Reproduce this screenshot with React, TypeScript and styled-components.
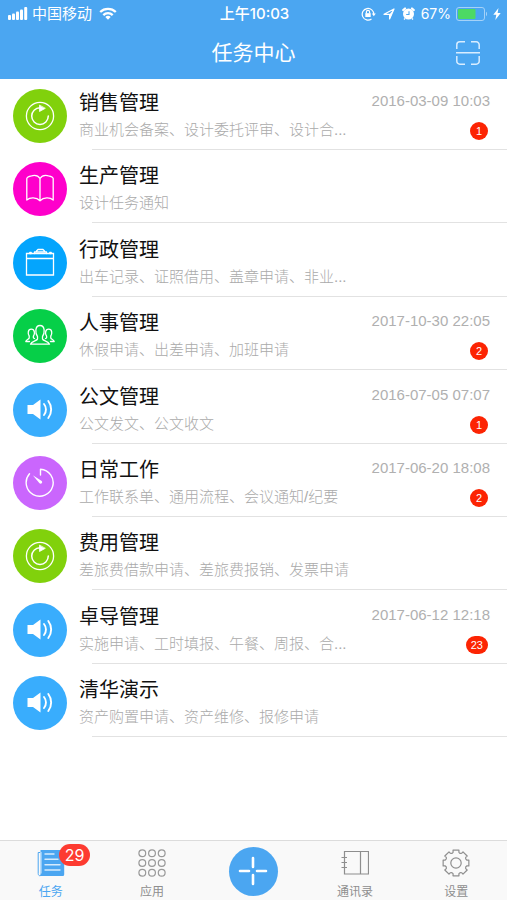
import React from "react";
import styled, { createGlobalStyle } from "styled-components";

const BLUE = "#4ba6f1";

const GlobalStyle = createGlobalStyle`
  * { box-sizing: border-box; }
  html, body { margin: 0; padding: 0; background: #fff; }
  body, button { font-family: "Liberation Sans", "Noto Sans CJK SC", sans-serif; }
  button { border: 0; padding: 0; background: none; color: inherit; cursor: pointer; }
`;

const Screen = styled.div`
  display: flex;
  flex-direction: column;
  min-height: 100vh;
`;

const Header = styled.header`
  background: ${BLUE};
  color: #fff;
`;

const StatusBar = styled.div`
  display: grid;
  grid-template-columns: 1fr auto 1fr;
  align-items: center;
  height: 27px;
  padding: 0 6px 0 8px;
  line-height: 20px;
`;

const StatusGroup = styled.div<{ $end?: boolean }>`
  display: flex;
  align-items: center;
  justify-content: ${(p) => (p.$end ? "flex-end" : "flex-start")};
  gap: ${(p) => (p.$end ? 5 : 4)}px;
`;

const Carrier = styled.span`
  font-size: 15px;
  padding-right: 3px;
`;

const Clock = styled.time`
  font-family: Inter, "Noto Sans CJK SC", sans-serif;
  font-size: 15px;
  font-weight: 500;
`;

const StatusIcons = styled.span`
  display: flex;
  align-items: center;
  gap: 7px;
  padding-right: 1px;
`;

const Percent = styled.span`
  font-family: Inter, sans-serif;
  font-size: 14px;
`;

const TitleBar = styled.div`
  display: grid;
  grid-template-columns: 1fr auto 1fr;
  align-items: center;
  height: 52px;
  padding: 0 26px;
`;

const PageTitle = styled.h1`
  grid-column: 2;
  margin: 0;
  font-size: 21px;
  font-weight: 400;
  line-height: 28px;
`;

const ScanButton = styled.button`
  justify-self: end;
  display: flex;
`;

const TaskList = styled.ul`
  display: flex;
  flex-direction: column;
  justify-content: space-between;
  min-height: 658px;
  margin: 0;
  padding: 0;
  list-style: none;
`;

const TaskRow = styled.li`
  display: flex;
  flex-direction: column;
`;

const TaskButton = styled.button`
  display: flex;
  align-items: flex-start;
  gap: 12px;
  width: 100%;
  height: 70px;
  padding: 10px 17px 0 13px;
  text-align: left;
`;

const Avatar = styled.span<{ $color: string }>`
  flex: none;
  display: grid;
  place-items: center;
  width: 54px;
  height: 54px;
  border-radius: 50%;
  background: ${(p) => p.$color};
`;

const TaskText = styled.span`
  flex: 1;
  min-width: 0;
  display: flex;
  flex-direction: column;
`;

const TaskName = styled.span`
  color: #111;
  font-size: 20px;
  line-height: 28px;
`;

const TaskSummary = styled.span`
  color: #aaa;
  font-size: 15px;
  font-weight: 300;
  line-height: 26px;
  white-space: nowrap;
  overflow: hidden;
`;

const TaskMeta = styled.span`
  flex: none;
  display: flex;
  flex-direction: column;
  align-items: flex-end;
  gap: 9px;
`;

const TaskDate = styled.time`
  color: #b0b0b0;
  font-size: 15px;
  line-height: 24px;
`;

const CountBadge = styled.span`
  min-width: 18px;
  height: 18px;
  margin-right: 2px;
  padding: 0 5px;
  border-radius: 9px;
  background: #fc2403;
  color: #fff;
  font-size: 11px;
  line-height: 18px;
  text-align: center;
`;

const Divider = styled.span`
  height: 1px;
  margin-left: 92px;
  background: #e2e2e2;
`;

const TabBar = styled.nav`
  display: grid;
  grid-template-columns: repeat(5, 1fr);
  height: 60px;
  margin-top: auto;
  border-top: 1px solid #dcdcdc;
  background: #f9f9f9;
`;

const Tab = styled.button<{ $active?: boolean }>`
  display: flex;
  flex-direction: column;
  align-items: center;
  gap: 6px;
  padding-top: 8px;
  color: ${(p) => (p.$active ? BLUE : "#8e8e8e")};
  font-size: 12px;
  line-height: 18px;
`;

const TabIcon = styled.span`
  position: relative;
  display: flex;
`;

const TabBadge = styled.span`
  position: absolute;
  left: 22px;
  top: -5px;
  padding: 0 6px;
  border-radius: 11px;
  background: #fd3b31;
  color: #fff;
  font-family: Inter, sans-serif;
  font-size: 16px;
  line-height: 22px;
`;

const AddButton = styled.button`
  place-self: center;
  display: grid;
  place-items: center;
  width: 49px;
  height: 49px;
  border-radius: 50%;
  background: ${BLUE};
`;

const line = {
  fill: "none",
  stroke: "#fff",
  strokeWidth: 1.3,
  strokeLinecap: "round" as const,
  strokeLinejoin: "round" as const,
};

function RefreshIcon() {
  return (
    <svg width="30" height="30" viewBox="0 0 30 30" {...line}>
      <circle cx="15" cy="15" r="13.6" />
      <path d="M16 6.800H15a8.300 8.300 0 1 0 8.300 8.300" strokeWidth="1.500" />
      <path d="M14.500 4.500v6l5.500-3z" fill="#fff" strokeWidth=".8" />
    </svg>
  );
}

function BookIcon() {
  return (
    <svg width="30" height="30" viewBox="0 0 30 30" {...line}>
      <path d="M15 4.500C13 1.300 9 1.200 6.500 1.800 4 2.300 2 3 1.800 4.500V26c3.200-2.800 9.500-3 13.200.8 3.700-3.800 10-3.600 13.200-.8V4.500C28 3 26 2.300 23.500 1.800 21 1.200 17 1.300 15 4.500zV26.500" />
    </svg>
  );
}

function CaseIcon() {
  return (
    <svg width="30" height="30" viewBox="0 0 30 30" {...line}>
      <path d="M1.500 5.500h27v21.500h-27zM1.500 10.500h27" strokeLinejoin="miter" />
      <path d="M9.500 5.500V4h2V3l1.500-1.500h5L19.500 3v1h2v1.500M11.500 4h8" />
      <path d="M4.800 5.500v-1h1.400v1zM24.800 5.500v-1h1.400v1z" fill="#fff" />
    </svg>
  );
}

function PeopleIcon() {
  return (
    <svg width="30" height="30" viewBox="0 0 30 30" {...line}>
      <path d="M12.500 15.500C10.300 13 9.500 4.500 15 4.500s4.700 8.500 2.500 11v2.500c.5 2 6 1.800 7 5.200h-19c1-3.400 6.500-3.200 7-5.200z" />
      <path d="M9.500 17.500c-1-.3-1.500-1-1-2.500 1.500-2 1.500-6.800-2.200-6.800S2.700 13 4.200 15v2C3.700 18.600 1 18.500.8 20.500H4.500M20.500 17.500c1-.3 1.500-1 1-2.500-1.500-2-1.500-6.800 2.200-6.800s3.600 4.800 2.100 6.800v2c.5 1.600 3.200 1.500 3.400 3.500H25.500" />
    </svg>
  );
}

function SpeakerIcon() {
  return (
    <svg width="30" height="30" viewBox="0 0 30 30" {...line}>
      <path d="M2.500 10H8L15.500 4.500v20L8 19H2.500z" fill="#fff" stroke="none" />
      <path d="M19 9c2.600 3.200 2.600 7.800 0 11M23.300 6c3.800 5 3.800 12 0 17" strokeWidth="1.900" />
    </svg>
  );
}

function TimerIcon() {
  return (
    <svg width="30" height="30" viewBox="0 0 30 30" {...line}>
      <path d="M15.500 7V1.200A13.500 13.500 0 1 1 4.500 5.800" strokeWidth="1.400" />
      <path d="M7.800 7.300L16.700 13c1.500 1.500-.8 3.600-2.200 2.200z" fill="#fff" stroke="none" />
    </svg>
  );
}

function SignalIcon() {
  return (
    <svg width="20" height="13" viewBox="0 0 20 13" fill="#fff">
      <rect x="0" y="8" width="3" height="5" rx="1" />
      <rect x="4" y="6.500" width="3" height="6.500" rx="1" />
      <rect x="8" y="4.500" width="3" height="8.500" rx="1" />
      <rect x="12" y="2.500" width="3" height="10.500" rx="1" />
      <rect x="16.200" y="0" width="3" height="13" rx="1" />
    </svg>
  );
}

function WifiIcon() {
  return (
    <svg width="18" height="13" viewBox="0 0 18 13" fill="none" stroke="#fff" strokeWidth="2.300">
      <path d="M1.200 5a11.200 11.200 0 0 1 15.600 0M4.300 8.100a6.800 6.800 0 0 1 9.400 0" />
      <path d="M9 12.800L6.300 10a4 4 0 0 1 5.400 0z" fill="#fff" stroke="none" />
    </svg>
  );
}

function LockIcon() {
  return (
    <svg width="15" height="14" viewBox="0 0 15 14" fill="none" stroke="#fff" strokeWidth="1.200">
      <path d="M10.500 11.900A5.800 5.800 0 1 1 12.800 7.500" />
      <path d="M10.800 6.500h4l-2 2.800z" fill="#fff" stroke="none" />
      <rect x="4.300" y="6.200" width="5.400" height="3.800" fill="#fff" stroke="none" />
      <path d="M5.400 6.500V5a1.600 1.600 0 0 1 3.200 0v1.500" />
    </svg>
  );
}

function LocationIcon() {
  return (
    <svg width="12" height="12" viewBox="0 0 12 12" fill="none" stroke="#fff" strokeWidth="1.200" strokeLinejoin="round">
      <path d="M1 6.300L11 1 6.600 11V6.300z" />
      <path d="M6.600 6.300L11 1 6.600 11z" fill="#fff" stroke="none" />
    </svg>
  );
}

function AlarmIcon() {
  return (
    <svg width="13" height="13" viewBox="0 0 13 13">
      <circle cx="6.500" cy="7" r="5.500" fill="#fff" />
      <path d="M1.200 3L3 1.500M11.800 3L10 1.500" stroke="#fff" strokeWidth="2.200" strokeLinecap="round" />
      <path d="M7 4.200v3.300H4.200" fill="none" stroke={BLUE} strokeWidth="1.100" />
      <path d="M3 11.500l-1 1M10 11.500l1 1" stroke="#fff" strokeWidth="1.300" />
    </svg>
  );
}

function BatteryIcon() {
  return (
    <svg width="32" height="14" viewBox="0 0 32 14">
      <rect x=".5" y=".5" width="28" height="13" rx="2.500" fill="none" stroke="#a5d2f8" />
      <rect x="2" y="2" width="17.500" height="10" rx="1" fill="#4cd964" />
      <path d="M30 4.800c1.400.5 1.400 3.900 0 4.400z" fill="#a5d2f8" />
    </svg>
  );
}

function BoltIcon() {
  return (
    <svg width="8" height="12" viewBox="0 0 8 12" fill="#fff">
      <path d="M5.500 0L.3 6.800h3L2.300 12l5.400-7H4.600z" />
    </svg>
  );
}

function ScanIcon() {
  return (
    <svg width="26" height="26" viewBox="0 0 26 26" fill="none" stroke="#d9edff" strokeWidth="1.500">
      <path d="M1.800 9V4.800a3 3 0 0 1 3-3H10M16 1.800h5.200a3 3 0 0 1 3 3V9M1.800 16v5.200a3 3 0 0 0 3 3H10M16 24.200h5.200a3 3 0 0 0 3-3V16M1 12.800h24" />
    </svg>
  );
}

function NewsIcon() {
  return (
    <svg width="28" height="28" viewBox="0 0 28 28">
      <path d="M3.500 1h23.700v24.500a1.500 1.500 0 0 1-1.500 1.500H3.500z" fill={BLUE} />
      <path d="M3.500 3.500H1.200v21c0 3 3.300 2.800 3.300.5" fill="none" stroke={BLUE} />
      <path d="M4 3v21.500" stroke="#d6ebfd" />
      <path d="M8 5h9M8 10.300h13M8 15.700h15M8 21h15" stroke="#d6ebfd" strokeWidth="1.400" strokeLinecap="round" />
    </svg>
  );
}

function GridIcon() {
  const centres = [4.3, 14, 23.7];
  return (
    <svg width="28" height="28" viewBox="0 0 28 28" fill="none" stroke="#999" strokeWidth="1.200">
      {centres.map((y) => centres.map((x) => <circle key={`${x}-${y}`} cx={x} cy={y} r="3.400" />))}
    </svg>
  );
}

function ContactsIcon() {
  return (
    <svg width="28" height="28" viewBox="0 0 28 28" fill="none" stroke="#8e8e8e" strokeWidth="1.200">
      <path d="M3.500 2.500h24v22.500h-24zM19.500 2.500V25M.5 8.500H6M.5 13.500H6M.5 18.500H6" />
    </svg>
  );
}

function GearIcon() {
  const teeth = Array.from({ length: 8 }, (_, i) => {
    const at = (deg: number, r: number) => {
      const a = ((i * 45 + deg) * Math.PI) / 180;
      return `${(14 + r * Math.sin(a)).toFixed(2)} ${(14 - r * Math.cos(a)).toFixed(2)}`;
    };
    return `${i ? "L" : "M"}${at(-13, 13.2)}L${at(13, 13.2)}L${at(15, 11.2)}Q${at(22.5, 9.8)} ${at(30, 11.2)}`;
  }).join("");
  return (
    <svg width="28" height="28" viewBox="0 0 28 28" fill="none" stroke="#8e8e8e" strokeWidth="1.200" strokeLinejoin="round">
      <path d={`${teeth}Z`} />
      <circle cx="14" cy="14" r="5.200" />
    </svg>
  );
}

function PlusIcon() {
  return (
    <svg width="30" height="30" viewBox="0 0 30 30" stroke="#fff" strokeWidth="2.600" strokeLinecap="round">
      <path d="M15 2v9M15 19v9M2 15h9M19 15h9" />
    </svg>
  );
}

interface Task {
  name: string;
  summary: string;
  color: string;
  icon: React.ReactNode;
  date?: string;
  count?: number;
}

const tasks: Task[] = [
  { name: "销售管理", summary: "商业机会备案、设计委托评审、设计合...", color: "#81d10c", icon: <RefreshIcon />, date: "2016-03-09 10:03", count: 1 },
  { name: "生产管理", summary: "设计任务通知", color: "#fe00cb", icon: <BookIcon /> },
  { name: "行政管理", summary: "出车记录、证照借用、盖章申请、非业...", color: "#04a5fd", icon: <CaseIcon /> },
  { name: "人事管理", summary: "休假申请、出差申请、加班申请", color: "#06cf48", icon: <PeopleIcon />, date: "2017-10-30 22:05", count: 2 },
  { name: "公文管理", summary: "公文发文、公文收文", color: "#39adfd", icon: <SpeakerIcon />, date: "2016-07-05 07:07", count: 1 },
  { name: "日常工作", summary: "工作联系单、通用流程、会议通知/纪要", color: "#ca66fd", icon: <TimerIcon />, date: "2017-06-20 18:08", count: 2 },
  { name: "费用管理", summary: "差旅费借款申请、差旅费报销、发票申请", color: "#81d10c", icon: <RefreshIcon /> },
  { name: "卓导管理", summary: "实施申请、工时填报、午餐、周报、合...", color: "#39adfd", icon: <SpeakerIcon />, date: "2017-06-12 12:18", count: 23 },
  { name: "清华演示", summary: "资产购置申请、资产维修、报修申请", color: "#39adfd", icon: <SpeakerIcon /> },
];

export default function App() {
  return (
    <Screen>
      <GlobalStyle />
      <Header>
        <StatusBar>
          <StatusGroup>
            <SignalIcon />
            <Carrier>中国移动</Carrier>
            <WifiIcon />
          </StatusGroup>
          <Clock>上午10:03</Clock>
          <StatusGroup $end>
            <StatusIcons>
              <LockIcon />
              <LocationIcon />
              <AlarmIcon />
            </StatusIcons>
            <Percent>67%</Percent>
            <BatteryIcon />
            <BoltIcon />
          </StatusGroup>
        </StatusBar>
        <TitleBar>
          <PageTitle>任务中心</PageTitle>
          <ScanButton aria-label="扫一扫">
            <ScanIcon />
          </ScanButton>
        </TitleBar>
      </Header>
      <main>
        <TaskList>
          {tasks.map((task) => (
            <TaskRow key={task.name}>
              <TaskButton>
                <Avatar $color={task.color}>{task.icon}</Avatar>
                <TaskText>
                  <TaskName>{task.name}</TaskName>
                  <TaskSummary>{task.summary}</TaskSummary>
                </TaskText>
                {task.date && (
                  <TaskMeta>
                    <TaskDate>{task.date}</TaskDate>
                    <CountBadge>{task.count}</CountBadge>
                  </TaskMeta>
                )}
              </TaskButton>
              <Divider />
            </TaskRow>
          ))}
        </TaskList>
      </main>
      <TabBar>
        <Tab $active aria-current="page">
          <TabIcon>
            <NewsIcon />
            <TabBadge>29</TabBadge>
          </TabIcon>
          任务
        </Tab>
        <Tab>
          <GridIcon />
          应用
        </Tab>
        <AddButton aria-label="新建">
          <PlusIcon />
        </AddButton>
        <Tab>
          <ContactsIcon />
          通讯录
        </Tab>
        <Tab>
          <GearIcon />
          设置
        </Tab>
      </TabBar>
    </Screen>
  );
}
